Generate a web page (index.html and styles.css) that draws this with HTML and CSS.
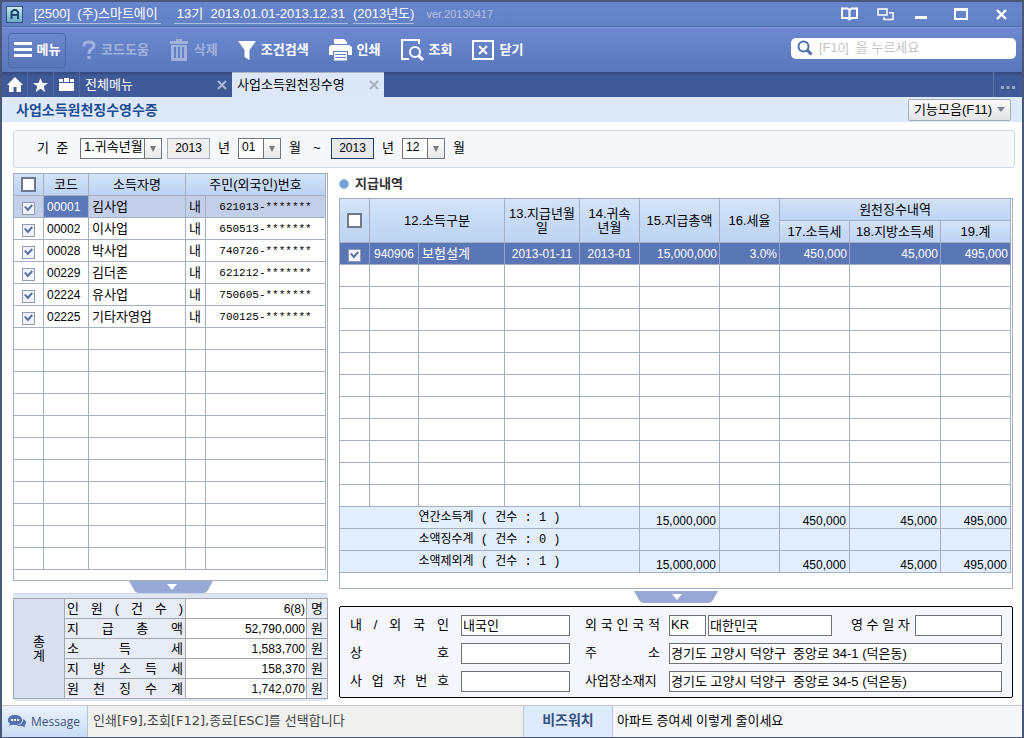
FILE: index.html
```html
<!DOCTYPE html>
<html lang="ko">
<head>
<meta charset="utf-8">
<title>사업소득원천징수영수증</title>
<link rel="stylesheet" href="styles.css">
</head>
<body>
<div class="app">
  <header class="titlebar">
    <svg class="logo" viewBox="0 0 17 17" width="17" height="17"><defs><linearGradient id="lg" x1="0" y1="0" x2="0" y2="1"><stop offset="0" stop-color="#d2ebf2"/><stop offset="1" stop-color="#62a9c6"/></linearGradient></defs><rect x=".5" y=".5" width="16" height="16" fill="url(#lg)" stroke="#34537c"/><path d="M5.500 13V6l2-2h2.500l2 2v7M5.500 9h6.500" fill="none" stroke="#20466b" stroke-width="2"/></svg>
    <span class="title-item">[2500]&nbsp; (주)스마트에이</span>
    <span class="title-item">13기&nbsp; 2013.01.01-2013.12.31</span>
    <span class="title-item tight">(2013년도)</span>
    <span class="version">ver.20130417</span>
    <div class="window-buttons">
      <button aria-label="도움말"><svg width="17" height="14" viewBox="0 0 17 14" fill="none" stroke="#fff" stroke-width="2"><path d="M1 1.500h5.500l2 1.500 2-1.500H16v9.500h-5.500l-2 1.500-2-1.500H1zM8.500 3v9"/></svg></button>
      <button aria-label="창 전환"><svg width="17" height="13" viewBox="0 0 17 13" fill="none" stroke="#fff" stroke-width="1.500"><path d="M1 1h9v6H1zM12 4.800h4V11.500H7V9"/></svg></button>
      <button aria-label="최소화"><svg width="12" height="12" viewBox="0 0 12 12"><path d="M0 8h12v3H0z" fill="#fff"/></svg></button>
      <button class="wide" aria-label="최대화"><svg width="14" height="12" viewBox="0 0 14 12"><path d="M0 0h14v12H0zM2 3v7h10V3z" fill="#fff" fill-rule="evenodd"/></svg></button>
      <button aria-label="닫기"><svg width="11" height="11" viewBox="0 0 11 11" stroke="#fff" stroke-width="2.400"><path d="M1 1l9 9M10 1l-9 9"/></svg></button>
    </div>
  </header>

  <nav class="toolbar">
    <button class="tool menu"><svg width="18" height="16" viewBox="0 0 18 16" fill="#fff"><path d="M0 0h18v3H0zM0 6h18v3H0zM0 12h18v3H0z"/></svg>메뉴</button>
    <button class="tool" disabled><svg width="14" height="20" viewBox="0 0 14 20" fill="none" stroke="#9fb2dd" stroke-width="3"><path d="M2 6.500V5q0-3 5-3t5 3.500q0 2-2.500 3.500T7 14M7 16v3"/></svg>코드도움</button>
    <button class="tool" disabled><svg width="20" height="22" viewBox="0 0 20 22"><path d="M7 0h6v2h6v3H1V2h6zM2 6h16v16H2z" fill="#9fb2dd"/><path d="M6 8v11M10 8v11M14 8v11" stroke="#6280c4" stroke-width="2"/></svg>삭제</button>
    <button class="tool"><svg width="18" height="19" viewBox="0 0 18 19" fill="#fff"><path d="M0 0h18l-6.500 9v10L6.500 16V9z"/></svg>조건검색</button>
    <button class="tool"><svg width="23" height="22" viewBox="0 0 23 22"><path d="M5 0h10l3 3v2H5zM2 6h18l3 2v8h-4v-4H4v4H0V8z" fill="#fff"/><path d="M5 13h13v8.500H5z" fill="#fff"/><path d="M4 12.500h15M6 15.500h11M6 18.500h11" stroke="#5f7cc0"/></svg>인쇄</button>
    <button class="tool"><svg width="23" height="22" viewBox="0 0 23 22" fill="none" stroke="#fff" stroke-width="2"><path d="M18 5V1H1v19h7"/><circle cx="14" cy="13" r="5"/><path d="M17.500 16.500l4.500 4.500" stroke-width="3"/></svg>조회</button>
    <button class="tool"><svg width="22" height="20" viewBox="0 0 22 20" fill="none" stroke="#fff" stroke-width="2"><path d="M1 1h20v18H1z"/><path d="M7 6l8 8M15 6l-8 8"/></svg>닫기</button>
    <label class="search"><svg width="16" height="16" viewBox="0 0 16 16" fill="none" stroke="#4a70a8" stroke-width="2"><circle cx="6.500" cy="6.500" r="5"/><path d="M10 10l4.500 4.500" stroke-width="3"/></svg><input type="text" placeholder="[F10]  을 누르세요" aria-label="검색"></label>
  </nav>

  <div class="tabs">
    <button class="tab-icon" aria-label="홈"><svg width="16" height="15" viewBox="0 0 16 15" fill="#fff"><path d="M8 0l8 8h-2v7H9.500v-5h-3v5H2V8H0z"/></svg></button>
    <button class="tab-icon" aria-label="즐겨찾기"><svg width="15" height="14" viewBox="0 0 15 14" fill="#fff"><path d="M7.500 0l2 5H15l-4.300 3.400 1.600 5.600-4.800-3.300L2.700 14l1.600-5.600L0 5h5.500z"/></svg></button>
    <button class="tab-icon" aria-label="메뉴판"><svg width="15" height="13" viewBox="0 0 15 13" fill="#fff"><path d="M0 1h4v3H0zM5 0h5v4H5zM11 1h4v3h-4zM0 5h15v8H0z"/></svg></button>
    <div class="tab"><a href="#">전체메뉴</a><button aria-label="탭 닫기"><svg width="10" height="10" viewBox="0 0 10 10" stroke="#a9b8d8" stroke-width="2"><path d="M1 1l8 8M9 1L1 9"/></svg></button></div>
    <div class="tab active"><a href="#">사업소득원천징수영</a><button aria-label="탭 닫기"><svg width="10" height="10" viewBox="0 0 10 10" stroke="#a7afba" stroke-width="2"><path d="M1 1l8 8M9 1L1 9"/></svg></button></div>
    <button class="tab-more" aria-label="더 보기"><svg width="14" height="3" viewBox="0 0 14 3" fill="#8fa4cf"><path d="M0 0h3v3H0zM5.500 0h3v3h-3zM11 0h3v3h-3z"/></svg></button>
  </div>

  <div class="subbar">
    <h1>사업소득원천징수영수증</h1>
    <button class="func">기능모음(F11)<svg width="8" height="5" viewBox="0 0 8 5" fill="#808790"><path d="M0 0h8L4 5z"/></svg></button>
  </div>

  <main class="content">
    <form class="filter">
      <label class="filter-label" for="basis">기&nbsp; 준</label>
      <span class="select basis"><select id="basis"><option>1.귀속년월</option></select></span>
      <input class="year" id="y1" value="2013" aria-label="시작 연도">
      <label class="unit" for="y1">년</label>
      <span class="select month"><select id="m1"><option>01</option></select></span>
      <label class="unit" for="m1">월</label>
      <span class="tilde">~</span>
      <input class="year current" id="y2" value="2013" aria-label="종료 연도">
      <label class="unit" for="y2">년</label>
      <span class="select month"><select id="m2"><option>12</option></select></span>
      <label class="unit" for="m2">월</label>
    </form>

    <div class="columns">
      <section class="left">
        <div class="grid-box">
          <table class="grid people">
            <colgroup><col class="w30"><col class="w45"><col class="w97"><col class="w20"><col class="w120"></colgroup>
            <thead><tr><th><input type="checkbox" aria-label="전체 선택"></th><th>코드</th><th>소득자명</th><th colspan="2">주민(외국인)번호</th></tr></thead>
            <tbody>
              <tr class="current"><td><input type="checkbox" checked aria-label="00001"></td><td class="code">00001</td><td>김사업</td><td>내</td><td class="id">621013-*******</td></tr>
              <tr><td><input type="checkbox" checked aria-label="00002"></td><td class="code">00002</td><td>이사업</td><td>내</td><td class="id">650513-*******</td></tr>
              <tr><td><input type="checkbox" checked aria-label="00028"></td><td class="code">00028</td><td>박사업</td><td>내</td><td class="id">740726-*******</td></tr>
              <tr><td><input type="checkbox" checked aria-label="00229"></td><td class="code">00229</td><td>김더존</td><td>내</td><td class="id">621212-*******</td></tr>
              <tr><td><input type="checkbox" checked aria-label="02224"></td><td class="code">02224</td><td>유사업</td><td>내</td><td class="id">750605-*******</td></tr>
              <tr><td><input type="checkbox" checked aria-label="02225"></td><td class="code">02225</td><td>기타자영업</td><td>내</td><td class="id">700125-*******</td></tr>
              <tr><td></td><td></td><td></td><td></td><td></td></tr>
              <tr><td></td><td></td><td></td><td></td><td></td></tr>
              <tr><td></td><td></td><td></td><td></td><td></td></tr>
              <tr><td></td><td></td><td></td><td></td><td></td></tr>
              <tr><td></td><td></td><td></td><td></td><td></td></tr>
              <tr><td></td><td></td><td></td><td></td><td></td></tr>
              <tr><td></td><td></td><td></td><td></td><td></td></tr>
              <tr><td></td><td></td><td></td><td></td><td></td></tr>
              <tr><td></td><td></td><td></td><td></td><td></td></tr>
              <tr><td></td><td></td><td></td><td></td><td></td></tr>
              <tr><td></td><td></td><td></td><td></td><td></td></tr>
            </tbody>
          </table>
        </div>
        <button class="handle" aria-label="접기"><svg width="84" height="12" viewBox="0 0 84 12"><path d="M0 0h84l-5 9q-1.500 3-5 3H10q-3.500 0-5-3z" fill="#98a9d6"/><path d="M38 3h10l-5 6z" fill="#fff"/></svg></button>
        <div class="summary">
          <table>
            <colgroup><col class="w51"><col class="w121"><col class="w121"><col class="w21"></colgroup>
            <tr><th rowspan="5" class="total">총<br>계</th><th>인 원 ( 건 수 )</th><td>6(8)</td><th>명</th></tr>
            <tr><th>지 급 총 액</th><td>52,790,000</td><th>원</th></tr>
            <tr><th>소 득 세</th><td>1,583,700</td><th>원</th></tr>
            <tr><th>지 방 소 득 세</th><td>158,370</td><th>원</th></tr>
            <tr><th>원 천 징 수 계</th><td>1,742,070</td><th>원</th></tr>
          </table>
        </div>
      </section>

      <section class="right">
        <h2>지급내역</h2>
        <div class="grid-box">
          <table class="grid pay">
            <colgroup><col class="w30"><col class="w49"><col class="w86"><col class="w75"><col class="w60"><col class="w80"><col class="w60"><col class="w70"><col class="w91"><col class="w70"></colgroup>
            <thead>
              <tr><th rowspan="2"><input type="checkbox" aria-label="전체 선택"></th><th rowspan="2" colspan="2">12.소득구분</th><th rowspan="2">13.지급년월<br>일</th><th rowspan="2">14.귀속<br>년월</th><th rowspan="2">15.지급총액</th><th rowspan="2">16.세율</th><th colspan="3">원천징수내역</th></tr>
              <tr><th>17.소득세</th><th>18.지방소득세</th><th>19.계</th></tr>
            </thead>
            <tbody>
              <tr class="picked"><td><input type="checkbox" checked aria-label="940906"></td><td class="mid">940906</td><td>보험설계</td><td class="mid">2013-01-11</td><td class="mid">2013-01</td><td class="num">15,000,000</td><td class="num">3.0%</td><td class="num">450,000</td><td class="num">45,000</td><td class="num">495,000</td></tr>
              <tr><td></td><td></td><td></td><td></td><td></td><td></td><td></td><td></td><td></td><td></td></tr>
              <tr><td></td><td></td><td></td><td></td><td></td><td></td><td></td><td></td><td></td><td></td></tr>
              <tr><td></td><td></td><td></td><td></td><td></td><td></td><td></td><td></td><td></td><td></td></tr>
              <tr><td></td><td></td><td></td><td></td><td></td><td></td><td></td><td></td><td></td><td></td></tr>
              <tr><td></td><td></td><td></td><td></td><td></td><td></td><td></td><td></td><td></td><td></td></tr>
              <tr><td></td><td></td><td></td><td></td><td></td><td></td><td></td><td></td><td></td><td></td></tr>
              <tr><td></td><td></td><td></td><td></td><td></td><td></td><td></td><td></td><td></td><td></td></tr>
              <tr><td></td><td></td><td></td><td></td><td></td><td></td><td></td><td></td><td></td><td></td></tr>
              <tr><td></td><td></td><td></td><td></td><td></td><td></td><td></td><td></td><td></td><td></td></tr>
              <tr><td></td><td></td><td></td><td></td><td></td><td></td><td></td><td></td><td></td><td></td></tr>
              <tr><td></td><td></td><td></td><td></td><td></td><td></td><td></td><td></td><td></td><td></td></tr>
            </tbody>
            <tfoot>
              <tr><td colspan="5" class="sum">연간소득계 ( 건수 : 1 )</td><td class="num">15,000,000</td><td></td><td class="num">450,000</td><td class="num">45,000</td><td class="num">495,000</td></tr>
              <tr><td colspan="5" class="sum">소액징수계 ( 건수 : 0 )</td><td></td><td></td><td></td><td></td><td></td></tr>
              <tr><td colspan="5" class="sum">소액제외계 ( 건수 : 1 )</td><td class="num">15,000,000</td><td></td><td class="num">450,000</td><td class="num">45,000</td><td class="num">495,000</td></tr>
            </tfoot>
          </table>
        </div>
        <button class="handle" aria-label="접기"><svg width="84" height="12" viewBox="0 0 84 12"><path d="M0 0h84l-5 9q-1.500 3-5 3H10q-3.500 0-5-3z" fill="#98a9d6"/><path d="M38 3h10l-5 6z" fill="#fff"/></svg></button>
        <form class="detail">
          <label for="nat">내 / 외 국 인</label><input id="nat" value="내국인">
          <label for="cc">외 국 인 국 적</label>
          <div class="pair"><input id="cc" class="cc" value="KR"><input class="country" value="대한민국" aria-label="국적명"><label for="date">영 수 일 자</label><input id="date" class="date"></div>
          <label for="firm">상 호</label><input id="firm">
          <label for="addr">주 소</label><input id="addr" value="경기도 고양시 덕양구  중앙로 34-1 (덕은동)">
          <label for="biz">사 업 자 번 호</label><input id="biz">
          <label for="site">사업장소재지</label><input id="site" value="경기도 고양시 덕양구  중앙로 34-5 (덕은동)">
        </form>
      </section>
    </div>
  </main>

  <footer class="status">
    <div class="msg-tag"><svg width="18" height="13" viewBox="0 0 18 13"><path d="M7 0c4 0 7 1.800 7 5s-3 5-7 5c-1 0-2 0-3-.300L1 11l1-2.500C0 7.500 0 6 0 5c0-3 3-5 7-5zM15 4c4 1.500 3.500 5 1.500 6.500l.500 2-3-1.500c-2 .300-4 0-5-.600 4-.400 6.500-3 6-6.400z" fill="#5470ad"/><path d="M3 4h2v2H3zM6 4h2v2H6zM9 4h2v2H9z" fill="#fff"/></svg>Message</div>
    <div class="msg-text">인쇄[F9],조회[F12],종료[ESC]를 선택합니다</div>
    <div class="biz-tag">비즈워치</div>
    <a class="biz-text" href="#">아파트 증여세 이렇게 줄이세요</a>
  </footer>
</div>
</body>
</html>
```
FILE: styles.css
```css
* { box-sizing: border-box; }

body {
  margin: 0;
  color: #000;
  background: #fff;
  font: 13px/16px "Liberation Sans", "Noto Sans CJK KR", sans-serif;
}

button, input, select { font: inherit; color: inherit; margin: 0; padding: 0; border: 0; background: none; border-radius: 0; }
button { display: flex; align-items: center; justify-content: center; }
a { color: inherit; text-decoration: none; }
svg { flex: none; display: block; }

.app {
  min-height: 100vh;
  display: flex;
  flex-direction: column;
  border: 2px solid #4a5878;
}

/* title bar */
.titlebar {
  height: 25px;
  display: flex;
  align-items: center;
  padding: 0 3px 0 4px;
  background: linear-gradient(#6886cc, #6280c4);
  border-bottom: 1px solid #4f6cb0;
  color: #fff;
}
.logo { margin-right: 8px; }
.title-item { padding: 2px 3px 1px; margin-right: 13px; border-bottom: 1px solid #a9bae3; white-space: pre; }
.title-item.tight { padding: 2px 0 1px; margin: 0 12px 0 -8px; }
.version { font-size: 11px; color: #b5c2e4; }
.window-buttons { display: flex; margin-left: auto; }
.window-buttons button { width: 36px; height: 24px; }
.window-buttons .wide { width: 44px; }

/* toolbar */
.toolbar {
  height: 45px;
  display: flex;
  align-items: center;
  gap: 20px;
  padding: 0 6px;
  background: linear-gradient(#6d88cf, #5a77bb);
  border-top: 1px solid #7f97d6;
  color: #fff;
  font-weight: bold;
}
.tool { gap: 5px; white-space: nowrap; }
.tool:disabled { color: #9fb2dd; }
.tool.menu {
  width: 58px;
  height: 35px;
  margin-right: -4px;
  border: 1px solid #4d69a9;
  border-radius: 4px;
  background: linear-gradient(#6c88cd, #5874b6);
}
.search {
  width: 225px;
  height: 21px;
  margin: 0 0 4px auto;
  display: flex;
  align-items: center;
  gap: 6px;
  padding: 0 6px;
  background: #fff;
  border-radius: 5px;
  font-weight: normal;
}
.search input { flex: 1; min-width: 0; outline: 0; white-space: pre; }
.search input::placeholder { color: #c4c4c4; opacity: 1; }

/* tabs */
.tabs { height: 25px; display: flex; background: linear-gradient(#34497e, #3f5a96 4px); color: #fff; }
.tab-icon { width: 26px; border-right: 1px solid #52699f; }
.tab { width: 152px; display: flex; align-items: center; justify-content: space-between; padding: 0 5px; white-space: nowrap; }
.tab.active { background: #dce8f8; color: #000; border-top: 1px solid #a9b3c4; }
.tab-more { width: 29px; margin-left: auto; border-left: 1px solid #6076a8; padding-top: 6px; }

/* page heading */
.subbar { height: 25px; display: flex; align-items: center; justify-content: space-between; padding: 0 11px 0 14px; background: #dce9f9; }
.subbar h1 { margin: 0; font-size: 14px; line-height: 18px; color: #1d4c94; }
.func { height: 22px; gap: 5px; padding: 0 5px; border: 1px solid #a4acb8; border-radius: 2px; background: linear-gradient(#fafafa, #e2e4e8); }

/* content */
.content { flex: 1; padding: 8px 7px 4px 11px; }

.filter {
  height: 38px;
  display: flex;
  align-items: center;
  padding: 0 23px 2px;
  background: #f5f7fb;
  border: 1px solid #ccd8e6;
  border-radius: 3px;
}
.filter-label { width: 43px; }
.select { position: relative; display: block; height: 21px; border: 1px solid #70757c; background: #fff; }
.select select { width: 100%; height: 19px; padding: 0 17px 2px 3px; appearance: none; outline: 0; }
.select::before { content: ""; position: absolute; top: 0; right: 0; width: 16px; height: 19px; border-left: 1px solid #70757c; background: linear-gradient(#fff, #e6e6e6); pointer-events: none; }
.select::after { content: ""; position: absolute; top: 7px; right: 5px; border: 3px solid transparent; border-top: 6px solid #7a7a7a; border-bottom: 0; pointer-events: none; }
.basis { width: 82px; margin-right: 5px; }
.month { width: 43px; font-size: 12px; }
.year { width: 43px; height: 21px; text-align: center; font-size: 12px; border: 1px solid #a9adb3; background: #efefef; }
.year.current { border-color: #1f3d6b; background: #e8e8e8; }
.unit { width: 28px; padding-left: 8px; }
.tilde { width: 22px; padding-left: 4px; }

.columns { display: grid; grid-template-columns: 315px minmax(0, 1fr); gap: 11px; padding: 5px 2px 0 0; }

.grid-box { border: 1px solid #a5afc0; background: #fff; padding-right: 1px; }
.left .grid-box { padding-bottom: 10px; }
.right .grid-box { padding-bottom: 15px; }

.grid { width: 100%; table-layout: fixed; border-collapse: separate; border-spacing: 0; }
.grid tr { height: 22px; }
.grid th, .grid td { height: 22px; padding: 0 3px; border: solid #a5afc4; border-width: 0 1px 1px 0; line-height: 14px; white-space: nowrap; }
.grid th { padding: 0; font-weight: normal; background: linear-gradient(#d3e3f7, #bdd3f2); }
.grid td:first-child, .grid th:first-child { padding: 0; text-align: center; }
.grid .code, .grid .num, .grid .mid { font-size: 12px; }
.grid .num { text-align: right; padding-right: 2px; }
.grid .mid { text-align: center; padding: 0; }
.grid .id { font: 11px/14px "Liberation Mono", monospace; text-align: center; }
.grid .current td { background: #c3cfe9; }
.grid .current .code { background: #5b78b8; color: #fff; }
.grid .picked td { background: #5b76b5; color: #fff; border-right-color: #8ea3d2; }
.pay tfoot td { background: #e2eefc; }
.pay tfoot .num { vertical-align: bottom; padding-right: 3px; }
.pay tfoot td.sum { font: 12px/14px "Liberation Mono", "Noto Sans CJK KR", monospace; }

.w20 { width: 20px; } .w21 { width: 21px; } .w30 { width: 30px; } .w45 { width: 45px; }
.w49 { width: 49px; } .w51 { width: 51px; } .w60 { width: 60px; } .w70 { width: 70px; }
.w75 { width: 75px; } .w80 { width: 80px; } .w86 { width: 86px; } .w91 { width: 91px; }
.w97 { width: 97px; } .w120 { width: 120px; } .w121 { width: 121px; }

input[type="checkbox"] { appearance: none; display: block; position: relative; width: 13px; height: 13px; margin: 3px auto 0; border: 1px solid #8d9bb5; background: #f1f5fb; }
th input[type="checkbox"] { width: 15px; height: 15px; margin: 0 auto; border: 2px solid #6d7a8c; background: #fff; }
input[type="checkbox"]:checked::after { content: ""; position: absolute; inset: 1px; background: #5c71a6; clip-path: polygon(0 40%, 18% 28%, 42% 52%, 84% 8%, 100% 24%, 42% 90%); }

.handle { margin: 0 auto; }
.left, .right { display: flex; flex-direction: column; }

.summary { padding: 4px 0 2px; background: #dde6f2; border-top: 1px solid #cdd8e6; border-radius: 3px; }
.summary table { width: 100%; table-layout: fixed; border-collapse: collapse; }
.summary th, .summary td { height: 20px; padding: 0 2px; border: 1px solid #a3a7ae; font-weight: normal; line-height: 16px; white-space: nowrap; }
.summary th { background: #e8ecf5; text-align: justify; text-align-last: justify; }
.summary .total { background: #d9e0f1; text-align-last: center; line-height: 14px; }
.summary tr th:last-child { text-align-last: center; }
.summary td { background: #fff; text-align: right; padding-right: 1px; font-size: 12px; }

.right h2 { height: 25px; margin: 0; display: flex; align-items: center; gap: 6px; font-size: 13px; color: #333; padding-bottom: 4px; }
.right h2::before { content: ""; width: 8px; height: 8px; border-radius: 50%; background: #74a0d8; border: 1px solid #9dbde6; }
.right .handle { margin: 2px auto 3px; }

.detail {
  display: grid;
  grid-template-columns: 99px 109px 75px minmax(0, 1fr);
  column-gap: 12px;
  row-gap: 7px;
  padding: 8px 10px 5px;
  background: #f5f6fb;
  border: 1px solid #000;
  border-radius: 2px;
}
.detail label { text-align-last: justify; line-height: 19px; white-space: nowrap; }
.detail input { width: 100%; height: 21px; padding: 0 1px 2px; border: 1px solid #6f7277; background: #fff; outline: 0; }
.detail > label:nth-of-type(even) { margin-left: 3px; margin-right: -3px; }
.pair { display: flex; }
.detail .pair .cc { width: 37px; margin-right: 2px; }
.detail .pair .country { width: 124px; }
.pair label { width: 56px; margin: 0 8px 0 auto; }
.detail .pair .date { width: 87px; }

/* status bar */
.status { height: 32px; display: flex; line-height: 29px; border-top: 1px solid #c2c8d0; background: #f5f6fa; white-space: nowrap; }
.msg-tag { width: 86px; display: flex; align-items: center; gap: 5px; padding: 0 6px; background: linear-gradient(#eaf2fc, #c9dcf5); border-right: 1px solid #b7c2d4; color: #3f5379; font: 12px/29px "Open Sans", sans-serif; }
.msg-text { flex: 1; padding-left: 5px; background: #f0f0ef; color: #444; font-family: "DejaVu Sans", "Noto Sans CJK KR", sans-serif; }
.biz-tag { width: 90px; text-align: center; background: #deebfc; border: solid #bcc6d8; border-width: 0 1px; color: #35507f; font-size: 14px; font-weight: bold; }
.biz-text { width: 409px; padding-left: 4px; }
```
